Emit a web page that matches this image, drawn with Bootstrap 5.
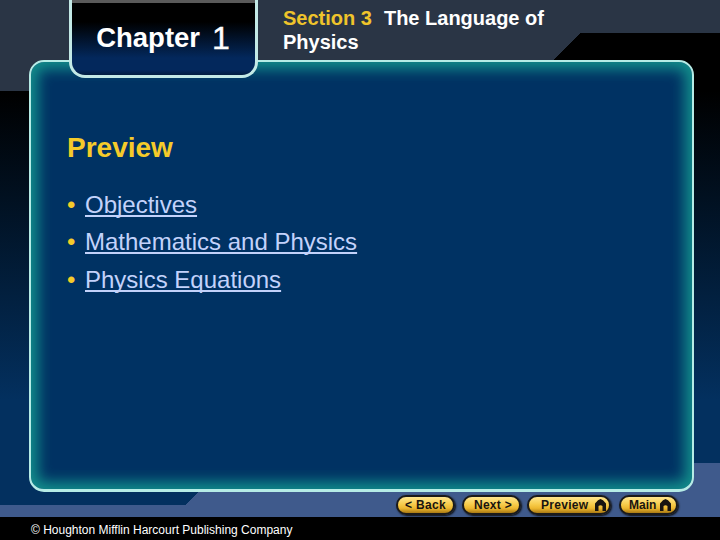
<!DOCTYPE html>
<html lang="en">
<head>
<meta charset="utf-8">
<title>Chapter 1 Section 3 Preview</title>
<link rel="stylesheet" href="https://cdn.jsdelivr.net/npm/bootstrap@5.3.0/dist/css/bootstrap.min.css">
<style>
html,body{margin:0;padding:0;background:#000;}
body{font-family:"Liberation Sans",Arial,sans-serif;}
.stage{width:720px;height:540px;overflow:hidden;
  background:
    linear-gradient(#000,#000) 0 517px/720px 23px no-repeat,
    linear-gradient(#3f5a8c,#3f5a8c) 0 505px/720px 12px no-repeat,
    linear-gradient(135deg,transparent 161.2px,#3f5a8c 161.2px) 0 463px/720px 54px no-repeat,
    linear-gradient(#2a3545,#2a3545) 0 0/720px 33px no-repeat,
    linear-gradient(135deg,#2a3545 433.5px,transparent 433.5px) 0 0/720px 91px no-repeat,
    linear-gradient(#000 91px,#03305f 400px);
}
.topbar{height:60px;padding-left:69px;}
.chap-tab{width:189px;height:78px;flex:none;position:relative;z-index:2;color:#fff;
  border:3px solid #c3e9e6;border-top:0;border-radius:0 0 16px 16px;
  background:linear-gradient(#000 0,#000 22px,#03285c 58px,#03285c 70px,#021c40 75px);
  box-shadow:inset 0 3px 0 #5a5a5a;padding:0 1px 0 0;}
.chap-word{font-size:27.5px;font-weight:700;}
.chap-num{font-size:32px;font-weight:400;margin-left:12px;-webkit-text-stroke:.4px #fff;}
.sec-title{width:270px;margin-left:25px;padding-top:6px;font-size:20px;line-height:24px;font-weight:700;color:#fff;}
.sec-num{color:#efc42b;margin-right:12px;}
.main-panel{width:665px;height:432px;margin-left:29px;flex:none;
  border:2px solid #b6ece6;border-bottom-width:3px;border-radius:15px;
  background:#003263;box-shadow:inset 0 0 14px 7px #128f8c;padding:69px 0 0 36px;}
.panel-head{font-size:28px;line-height:34px;font-weight:700;color:#f5cb2a;margin:0 0 20.7px;}
.topic-list{font-size:24px;line-height:37.5px;margin:0;}
.topic-bullet{color:#f5cb2a;width:18px;flex:none;}
.topic-link{color:#c3d2fb;text-decoration:underline;text-decoration-thickness:2px;text-decoration-skip-ink:none;text-underline-offset:2px;}
.navrow{height:25px;margin-top:3px;padding-left:396px;flex:none;gap:7px;}
.nav-pill{height:20px;border:2px solid #1a1a1a;border-radius:10px;flex:none;
  background:linear-gradient(#ffe68f 0,#f7cc4c 45%,#eeb82f 70%,#a97a14 100%);
  color:#181410;font-size:12px;font-weight:700;line-height:1;letter-spacing:.3px;
  box-shadow:1px 1px 2px #0c0c0c;}
.pill-back{width:59px;}
.pill-next{width:59px;padding-left:3px;}
.pill-prev{width:84px;margin-left:-1px;gap:6px;padding-left:12px;}
.pill-main{width:59px;margin-left:1px;gap:3px;padding-left:8px;letter-spacing:0;}
.footer-bar{height:23px;padding-left:31px;color:#fff;font-size:12px;line-height:28px;margin-top:-4px;flex:none;}
</style>
</head>
<body>
<div class="stage d-flex flex-column">
  <header class="topbar d-flex align-items-start">
    <div class="chap-tab d-flex align-items-center justify-content-center">
      <span class="chap-word">Chapter</span><span class="chap-num">1</span>
    </div>
    <div class="sec-title">
      <div class="d-flex"><span class="sec-num">Section 3</span><span>The Language of</span></div>
      <div>Physics</div>
    </div>
  </header>
  <main class="main-panel">
    <h1 class="panel-head">Preview</h1>
    <ul class="topic-list list-unstyled">
      <li class="d-flex"><span class="topic-bullet">•</span><a class="topic-link" href="#">Objectives</a></li>
      <li class="d-flex"><span class="topic-bullet">•</span><a class="topic-link" href="#">Mathematics and Physics</a></li>
      <li class="d-flex"><span class="topic-bullet">•</span><a class="topic-link" href="#">Physics Equations</a></li>
    </ul>
  </main>
  <nav class="navrow d-flex align-items-start">
    <div class="nav-pill pill-back d-flex align-items-center justify-content-center">&lt; Back</div>
    <div class="nav-pill pill-next d-flex align-items-center justify-content-center">Next &gt;</div>
    <div class="nav-pill pill-prev d-flex align-items-center">Preview
      <svg width="13" height="12" viewBox="0 0 12 12"><path d="M6 0 L8.5 1.2 L11.5 4.5 V12 H8 V7 Q6 5.5 4 7 V12 H.5 V4.5 L3.5 1.2 Z" fill="#181410"/></svg></div>
    <div class="nav-pill pill-main d-flex align-items-center">Main
      <svg width="13" height="12" viewBox="0 0 12 12"><path d="M6 0 L8.5 1.2 L11.5 4.5 V12 H8 V7 Q6 5.5 4 7 V12 H.5 V4.5 L3.5 1.2 Z" fill="#181410"/></svg></div>
  </nav>
  <footer class="footer-bar">© Houghton Mifflin Harcourt Publishing Company</footer>
</div>
<script src="https://cdn.jsdelivr.net/npm/bootstrap@5.3.0/dist/js/bootstrap.bundle.min.js"></script>
</body>
</html>
